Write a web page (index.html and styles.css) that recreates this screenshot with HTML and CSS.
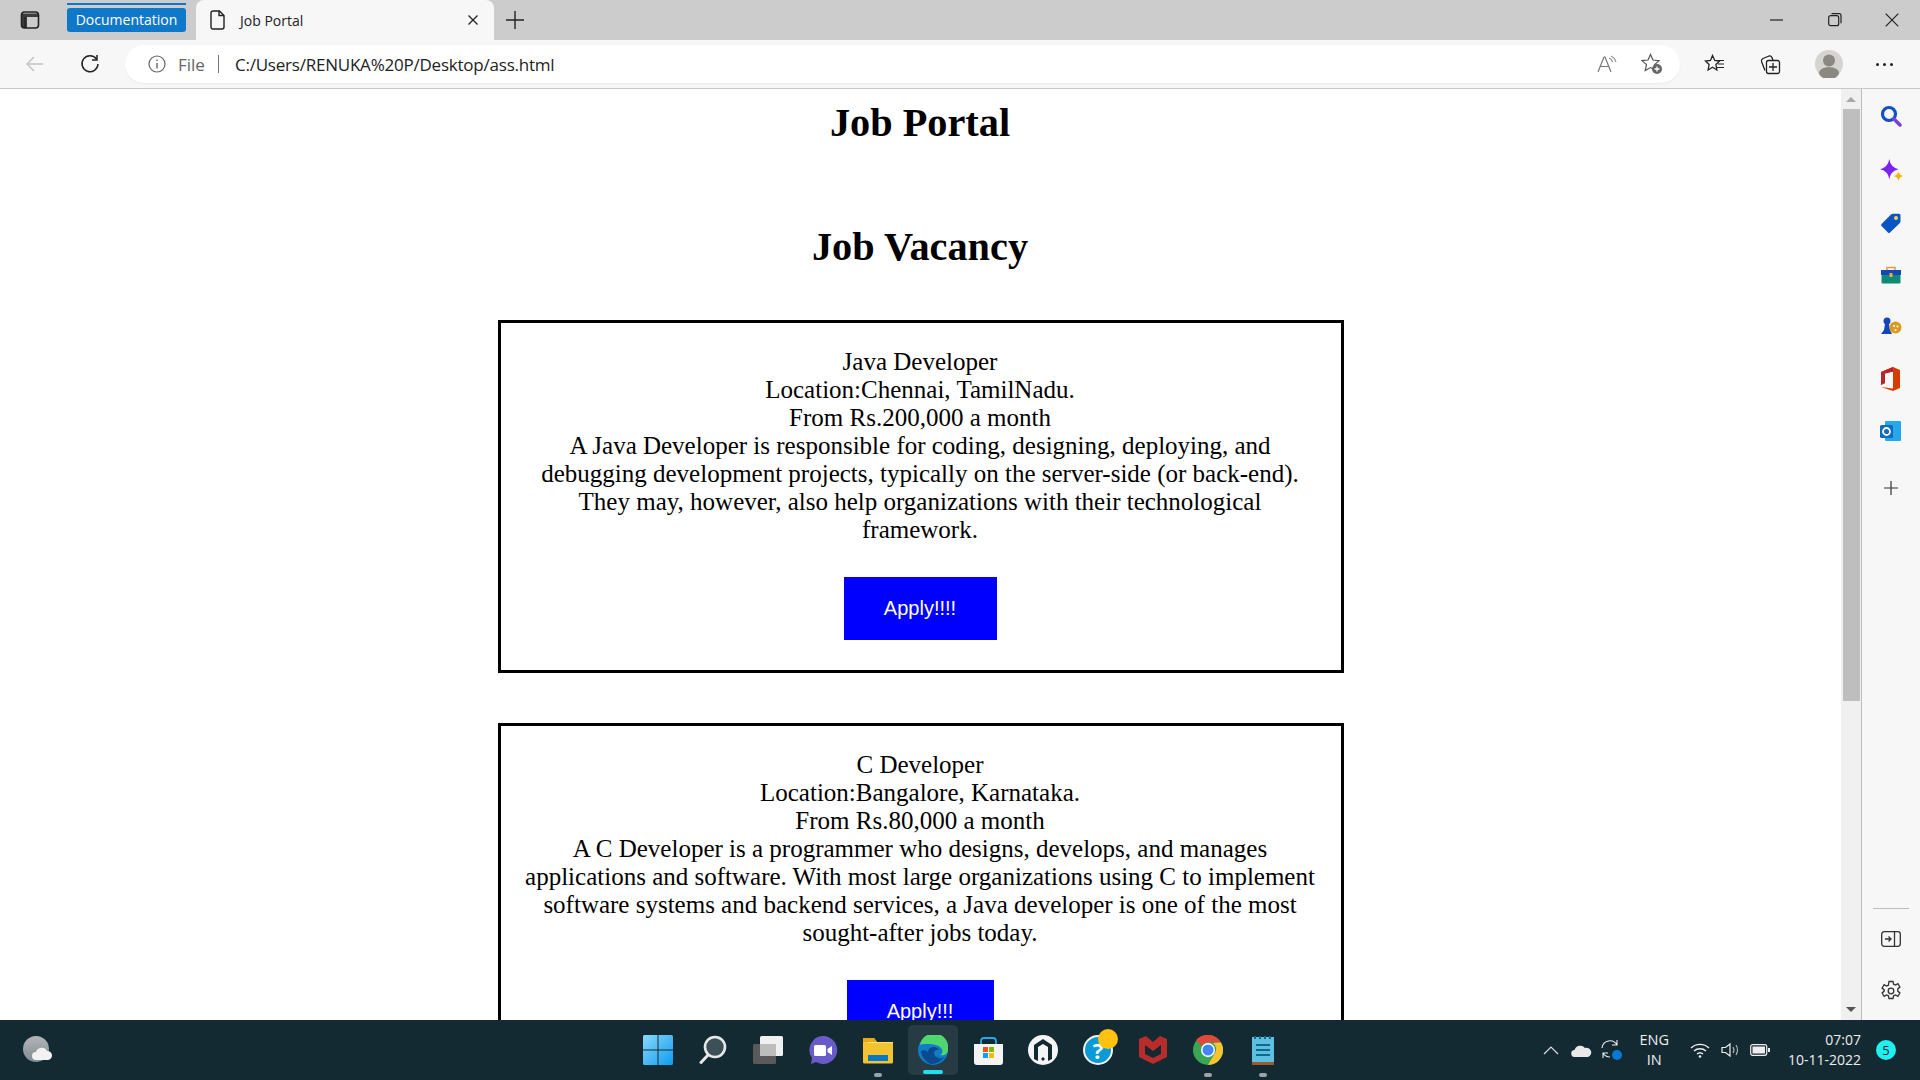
FILE: index.html
```html
<!DOCTYPE html>
<html lang="en">
<head>
<meta charset="utf-8">
<title>Job Portal</title>
<link rel="stylesheet" href="styles.css">
</head>
<body>
<div class="app">
  <header class="tabbar">
    <svg class="tabs-btn" width="20" height="20" viewBox="0 0 20 20"><rect x="1.5" y="2" width="17" height="16" rx="3" fill="none" stroke="#222" stroke-width="1.6"/><path d="M2 3.5h16v3.5H7v11H2z" fill="#222" opacity=".85"/><path d="M5 7v11" stroke="#222" stroke-width="1.4"/></svg>
    <div class="group"><span class="group-line"></span><span class="group-label">Documentation</span></div>
    <div class="tab">
      <svg width="16" height="20" viewBox="0 0 16 20"><path d="M2.500 1h7l4.500 4.500V17a2 2 0 0 1-2 2h-9a2 2 0 0 1-2-2V3a2 2 0 0 1 2-2z M9 1v4.500h5" fill="none" stroke="#222" stroke-width="1.4"/></svg>
      <span class="tab-title">Job Portal</span>
      <svg class="tab-close" width="12" height="12" viewBox="0 0 12 12"><path d="M1.500 1.500l9 9M10.500 1.500l-9 9" stroke="#222" stroke-width="1.300"/></svg>
    </div>
    <svg class="new-tab" width="20" height="20" viewBox="0 0 20 20"><path d="M10 1v18M1 10h18" stroke="#222" stroke-width="1.400"/></svg>
    <div class="win-controls">
      <svg width="14" height="14" viewBox="0 0 14 14"><path d="M0 7h13" stroke="#222" stroke-width="1.200"/></svg>
      <svg width="14" height="14" viewBox="0 0 14 14"><rect x=".7" y="2.700" width="10" height="10" rx="2" fill="none" stroke="#222" stroke-width="1.200"/><path d="M3.500 .7h7.500a2 2 0 0 1 2 2v7.500" fill="none" stroke="#222" stroke-width="1.200"/></svg>
      <svg width="14" height="14" viewBox="0 0 14 14"><path d="M.7 .7l12.600 12.600M13.300 .7L.7 13.300" stroke="#222" stroke-width="1.200"/></svg>
    </div>
  </header>
  <nav class="toolbar">
    <svg class="back" width="20" height="18" viewBox="0 0 20 18"><path d="M18 9H2M9 2L2 9l7 7" fill="none" stroke="#c4c4c4" stroke-width="1.500"/></svg>
    <svg class="reload" width="20" height="20" viewBox="0 0 20 20"><path d="M16.500 5A8 8 0 1 0 18 10" fill="none" stroke="#222" stroke-width="1.500"/><path d="M17 1v5h-5" fill="none" stroke="#222" stroke-width="1.500"/></svg>
    <div class="address">
      <svg width="20" height="20" viewBox="0 0 20 20"><circle cx="10" cy="10" r="8" fill="none" stroke="#666" stroke-width="1.200"/><path d="M10 9v5.500M10 5.500v1.500" stroke="#666" stroke-width="1.400"/></svg>
      <span class="scheme">File</span>
      <span class="sep"></span>
      <span class="url">C:/Users/RENUKA%20P/Desktop/ass.html</span>
      <span class="grow"></span>
      <svg width="20" height="18" viewBox="0 0 20 18"><path d="M1 17L7 2h1l6 15M3.500 11.500h9" fill="none" stroke="#777" stroke-width="1.200"/><path d="M12 3q3 1 3.500 4M14 1q4 1.500 5 6" fill="none" stroke="#777" stroke-width="1"/></svg>
      <svg class="fav-add" width="22" height="22" viewBox="0 0 22 22"><path d="M9.500 1.500l2.500 5.500 6 .6-4.500 4 1.300 6-5.300-3-5.300 3 1.300-6-4.500-4 6-.6z" fill="none" stroke="#555" stroke-width="1.200"/><circle cx="16" cy="16" r="5" fill="#666"/><path d="M16 13.500v5M13.500 16h5" stroke="#fff" stroke-width="1.300"/></svg>
    </div>
    <svg class="tool-fav" width="22" height="20" viewBox="0 0 22 20"><path d="M8.500 1.500l2.200 5 5 .5-3.800 3.500 1 5.500-4.400-2.700-4.400 2.700 1-5.500L1.500 7l5-.5z" fill="none" stroke="#222" stroke-width="1.300"/><path d="M13 6.500h7M14 10h6M13 13.500h7" stroke="#222" stroke-width="1.200"/></svg>
    <svg class="tool-col" width="21" height="21" viewBox="0 0 21 21"><rect x="6.500" y="6.500" width="13" height="13" rx="2" fill="none" stroke="#222" stroke-width="1.300"/><path d="M13 9v8M9 13h8" stroke="#222" stroke-width="1.300"/><path d="M5 16.500L1.500 7.500q-.5-2 1.500-3l6-2.500q2-.5 3 1.500l1 3" fill="none" stroke="#222" stroke-width="1.300"/></svg>
    <div class="avatar"><svg width="28" height="28" viewBox="0 0 28 28"><circle cx="14" cy="14" r="14" fill="#d6d4cf"/><circle cx="14" cy="10.500" r="6" fill="#8b8781"/><ellipse cx="14" cy="23" rx="10" ry="6" fill="#8b8781"/></svg></div>
    <div class="more"><i></i><i></i><i></i></div>
  </nav>
  <main class="main">
    <div class="page">
      <h1 class="title">Job Portal</h1>
      <h1 class="subtitle">Job Vacancy</h1>
      <section class="job">
        <p class="job-text">Java Developer<br>Location:Chennai, TamilNadu.<br>From Rs.200,000 a month<br>A Java Developer is responsible for coding, designing, deploying, and debugging development projects, typically on the server-side (or back-end). They may, however, also help organizations with their technological framework.</p>
        <button class="apply apply-wide">Apply!!!!</button>
      </section>
      <section class="job">
        <p class="job-text">C Developer<br>Location:Bangalore, Karnataka.<br>From Rs.80,000 a month<br>A C Developer is a programmer who designs, develops, and manages applications and software. With most large organizations using C to implement software systems and backend services, a Java developer is one of the most sought-after jobs today.</p>
        <button class="apply">Apply!!!</button>
      </section>
    </div>
    <div class="scrollbar">
      <span class="arrow-up"></span>
      <div class="thumb"></div>
      <span class="arrow-down"></span>
    </div>
    <aside class="sidebar">
      <svg width="22" height="22" viewBox="0 0 22 22"><circle cx="9" cy="9" r="6.500" fill="none" stroke="#1250c8" stroke-width="3.200"/><path d="M14 14l6 6" stroke="#7a3fe0" stroke-width="3.500" stroke-linecap="round"/></svg>
      <svg class="side-star" width="24" height="24" viewBox="0 0 21 21"><path d="M9 0q1 7 8 9-7 1.500-8 9-1-7.500-8-9 7-2 8-9z" fill="#7a22f0"/><path d="M17 11q.4 3 4 4-3.600.5-4 4.500-.4-4-4-4.500 3.600-1 4-4z" fill="#f5b400"/></svg>
      <svg width="22" height="22" viewBox="0 0 22 22"><path d="M1.500 12L11 2.500q1-.8 2-.8h6q1.500 0 1.500 1.500v6q0 1-.8 2L10 20.500q-1 1-2 0l-6.500-6.500q-1-1 0-2z" fill="#0a55c4"/><circle cx="16" cy="6" r="2" fill="#ffd23f"/></svg>
      <svg width="22" height="22" viewBox="0 0 22 20"><path d="M7 5V2.500h8V5" fill="none" stroke="#d9a13a" stroke-width="1.500"/><rect x="1" y="5" width="20" height="5" fill="#1446b8"/><rect x="1.500" y="10" width="19" height="8.500" rx="1" fill="#0d8a78"/><rect x="9.500" y="8" width="3" height="4" fill="#f0b030"/></svg>
      <svg width="22" height="22" viewBox="0 0 22 22"><circle cx="7" cy="5" r="3.500" fill="#1446b8"/><path d="M5 8h4l1 6 2 4H1l3-4z" fill="#1446b8"/><circle cx="15.500" cy="11.500" r="6" fill="#dc9a20"/><circle cx="14" cy="10" r="1" fill="#fff"/><circle cx="17.500" cy="10.500" r="1" fill="#fff"/><circle cx="15.500" cy="14" r="1" fill="#fff"/></svg>
      <svg class="side-office" width="22" height="24" viewBox="0 0 22 24"><path d="M1 5L13 0l7 3v18l-7 3-12-4 12 1.500V4.500L5 6.500v9.500L1 18z" fill="#d83b01"/><path d="M1 5l12-5v4.500L5 6.500V16l-4 2z" fill="#b8232f"/></svg>
      <svg width="22" height="22" viewBox="0 0 22 22"><rect x="5" y="1" width="16" height="20" rx="1" fill="#28a8ea"/><rect x="0" y="5" width="13" height="13" rx="1.500" fill="#0f6cbd"/><circle cx="6.500" cy="11.500" r="3.500" fill="none" stroke="#fff" stroke-width="1.800"/></svg>
      <svg class="side-plus" width="14" height="14" viewBox="0 0 14 14"><path d="M7 0v14M0 7h14" stroke="#333" stroke-width="1.200"/></svg>
      <span class="grow"></span>
      <span class="side-rule"></span>
      <svg class="side-hide" width="20" height="16" viewBox="0 0 20 16"><rect x=".7" y=".7" width="18.600" height="14.600" rx="2.500" fill="none" stroke="#333" stroke-width="1.300"/><path d="M13.500 1v14" stroke="#333" stroke-width="1.300"/><path d="M4 8h6M7.500 5.500L10 8l-2.500 2.500" fill="none" stroke="#333" stroke-width="1.300"/></svg>
      <svg class="side-gear" width="22" height="22" viewBox="0 0 22 22"><path d="M9 1.500h4l.6 2.700 1.900.8 2.400-1.400 2 3.400-2.100 1.900v2.200l2.100 1.900-2 3.400-2.400-1.400-1.900.8-.6 2.700H9l-.6-2.700-1.900-.8-2.400 1.400-2-3.400 2.100-1.900V9.900L2.100 8l2-3.400 2.400 1.400 1.900-.8z" fill="none" stroke="#333" stroke-width="1.300"/><circle cx="11" cy="11" r="2.800" fill="none" stroke="#333" stroke-width="1.300"/></svg>
    </aside>
  </main>
  <footer class="taskbar">
    <svg class="weather" width="30" height="28" viewBox="0 0 30 28"><defs><linearGradient id="moon" x1="0" y1="0" x2="0" y2="1"><stop offset="0" stop-color="#b4b6b8"/><stop offset="1" stop-color="#7f8b92"/></linearGradient></defs><circle cx="13" cy="13" r="13" fill="url(#moon)"/><path d="M13 24a4 4 0 0 1 0-8 6 6 0 0 1 11-1 4.500 4.500 0 0 1 1 9z" fill="#f2f2f2"/></svg>
    <div class="task-center">
      <div class="task-app"><svg width="30" height="30" viewBox="0 0 30 30"><defs><linearGradient id="win" x1="0" y1="0" x2="1" y2="1"><stop offset="0" stop-color="#8ad8fb"/><stop offset="1" stop-color="#0e9cf0"/></linearGradient></defs><path d="M0 1.500Q0 0 1.500 0h13v14.500H0zM15.500 0h13Q30 0 30 1.500v13H15.500zM0 15.500h14.500V30h-13Q0 30 0 28.500zM15.500 15.500H30v13q0 1.500-1.500 1.500h-13z" fill="url(#win)"/></svg></div>
      <div class="task-app"><svg width="28" height="30" viewBox="0 0 28 30"><circle cx="16" cy="12" r="10" fill="#3d5056" stroke="#e8e8e8" stroke-width="2.600"/><path d="M9 20l-7 7.500" stroke="#e8e8e8" stroke-width="3" stroke-linecap="round"/></svg></div>
      <div class="task-app"><svg width="30" height="28" viewBox="0 0 30 28"><rect x="7" y="0" width="23" height="20" rx="1.500" fill="#f0f0f0"/><rect x="0" y="8" width="23" height="20" rx="1.500" fill="#5a5a5a"/><rect x="7" y="8" width="16" height="12" fill="#bdbdbd"/></svg></div>
      <div class="task-app"><svg width="30" height="30" viewBox="0 0 30 30"><path d="M15 1a14 14 0 1 1-7 26l-5 2 1-6A14 14 0 0 1 15 1z" fill="#6a5cc8"/><rect x="6" y="10" width="12" height="11" rx="1.500" fill="#fff"/><path d="M19.500 14l4.500-3v9l-4.500-3z" fill="#fff"/></svg></div>
      <div class="task-app"><svg width="32" height="28" viewBox="0 0 32 28"><path d="M1 2h11l3 4h16v20a1.500 1.500 0 0 1-1.500 1.500h-27A1.500 1.500 0 0 1 1 26z" fill="#f4c430"/><path d="M1 2h11l3 4H1z" fill="#e8a818"/><rect x="6" y="6" width="25" height="1" fill="#ffe27a"/><path d="M6 19h20v6H6z" fill="#0a78c8"/></svg><span class="dot"></span></div>
      <div class="task-app task-edge"><svg width="30" height="30" viewBox="0 0 30 30"><circle cx="15" cy="15" r="15" fill="#0f7cc8"/><path d="M2 10A14 14 0 0 1 30 15c0 4-4 6-8 5 3-1 3-5 1-7-3-4-15-5-21-3z" fill="#4fd66f"/><path d="M10 17c0-5 8-7 11-2-2-1-5 0-5 3 0 4 6 7 10 4a15 15 0 0 1-13 7C9 28 3 22 3 16c2-1 5-1 7 1z" fill="#0b4a8f"/></svg><span class="dash"></span></div>
      <div class="task-app"><svg width="29" height="29" viewBox="0 0 29 29"><path d="M7 8V5q0-3 3-3h9q3 0 3 3v3" fill="none" stroke="#2aa8e6" stroke-width="1.800"/><path d="M0 8h29v18q0 3-3 3H3q-3 0-3-3z" fill="#f4f4f4"/><rect x="9" y="11" width="5" height="5" fill="#f25022"/><rect x="15" y="11" width="5" height="5" fill="#7fba00"/><rect x="9" y="17" width="5" height="5" fill="#00a4ef"/><rect x="15" y="17" width="5" height="5" fill="#ffb900"/></svg></div>
      <div class="task-app"><svg width="30" height="30" viewBox="0 0 30 30"><circle cx="15" cy="15" r="15" fill="#f5f5f5"/><path d="M6 10l9-6 9 6v14l-4 2V12l-5-3-5 3v14l-4-2z" fill="#14282f"/><path d="M13 24l2-2 2 2-2 2z" fill="#14282f"/></svg></div>
      <div class="task-app"><svg width="30" height="30" viewBox="0 0 30 30"><circle cx="15" cy="15" r="14" fill="#0a9ad6" stroke="#f2f2f2" stroke-width="2"/></svg><span class="help-mark">?</span><span class="help-badge"></span></div>
      <div class="task-app"><svg width="28" height="30" viewBox="0 0 28 30"><path d="M0 4l7-3 7 6 7-6 7 3v18l-14 7L0 22z" fill="#b82c2c"/><path d="M6 10l8 6 8-6v9l-8 4-8-4z" fill="#14282f"/></svg></div>
      <div class="task-app"><svg width="30" height="30" viewBox="0 0 30 30"><circle cx="15" cy="15" r="15" fill="#3aa655"/><path d="M15 0a15 15 0 0 1 13 7.500H15a7.500 7.500 0 0 0-6.500 3.750L3 5A15 15 0 0 1 15 0z" fill="#e0483a"/><path d="M28 7.500A15 15 0 0 1 15 30l6.500-11.250A7.500 7.500 0 0 0 20 8z" fill="#f5c530"/><circle cx="15" cy="15" r="7" fill="#fff"/><circle cx="15" cy="15" r="5.500" fill="#4285f4"/></svg><span class="dot"></span></div>
      <div class="task-app"><svg width="24" height="30" viewBox="0 0 24 30"><rect x="1" y="2" width="22" height="26" fill="#5dc0e0"/><rect x="1" y="27" width="22" height="3" fill="#9a5a2a"/><path d="M5 10h14M5 15h14M5 20h14" stroke="#11688f" stroke-width="2"/><path d="M4 1v3M9 1v3M14 1v3M19 1v3" stroke="#11688f" stroke-width="2"/></svg><span class="dot"></span></div>
    </div>
    <div class="tray">
      <svg width="16" height="10" viewBox="0 0 16 10"><path d="M1 9l7-7 7 7" fill="none" stroke="#ddd" stroke-width="1.200"/></svg>
      <svg class="tray-cloud" width="21" height="14" viewBox="0 0 21 14"><path d="M4 14a3.500 3.500 0 0 1-.5-7A6 6 0 0 1 14 5a4.500 4.500 0 0 1 3 9z" fill="#e8e8e8"/></svg>
      <div class="tray-sync"><svg width="20" height="20" viewBox="0 0 20 20"><path d="M1 9a8 8 0 0 1 15-3M16 1v5h-5M2 19v-5h5M2 14a8 8 0 0 0 7 4" fill="none" stroke="#eee" stroke-width="1.100"/></svg><span class="sync-dot"></span></div>
      <div class="lang"><span>ENG</span><span>IN</span></div>
      <svg class="tray-wifi" width="20" height="16" viewBox="0 0 20 16"><path d="M1 6a13 13 0 0 1 18 0M4 9a9 9 0 0 1 12 0M7 12a4.500 4.500 0 0 1 6 0" fill="none" stroke="#eee" stroke-width="1.400"/><circle cx="10" cy="14.500" r="1.300" fill="#eee"/></svg>
      <svg class="tray-vol" width="20" height="16" viewBox="0 0 20 16"><path d="M1 5.500h3.500L9 2v12L4.500 10.500H1z" fill="none" stroke="#eee" stroke-width="1.200"/><path d="M12 5q2 3 0 6M15 3q3 5 0 10" fill="none" stroke="#bbb" stroke-width="1.100"/></svg>
      <svg width="20" height="14" viewBox="0 0 20 14"><rect x=".7" y="1.700" width="16" height="10.600" rx="2" fill="none" stroke="#eee" stroke-width="1.200"/><rect x="2.500" y="3.500" width="12.500" height="7" fill="#eee"/><rect x="18" y="5" width="2" height="4" fill="#eee"/></svg>
      <div class="clock"><span>07:07</span><span>10-11-2022</span></div>
      <span class="notif">5</span>
    </div>
  </footer>
</div>
</body>
</html>
```
FILE: styles.css
```css
* { box-sizing: border-box; }
html, body { margin: 0; padding: 0; height: 100%; overflow: hidden; }
.app { width: 1920px; height: 1080px; display: flex; flex-direction: column; font-family: "Open Sans", "Noto Sans", sans-serif; }
.grow { flex: 1; }

.tabbar { height: 40px; background: #cccccc; display: flex; align-items: center; flex: none; }
.tabs-btn { margin-left: 20px; }
.group { margin-left: 27px; width: 119px; height: 40px; display: flex; flex-direction: column; padding-top: 3px; gap: 3px; flex: none; }
.group-line { height: 2px; background: #0f78c8; flex: none; }
.group-label { height: 24px; background: #0f78c8; color: #fff; font-size: 14px; border-radius: 3px; text-align: center; line-height: 23px; }
.tab { margin-left: 10px; width: 298px; height: 40px; background: #f7f7f7; border-radius: 8px 8px 0 0; display: flex; align-items: center; padding: 0 15px 0 14px; flex: none; }
.tab-title { margin-left: 14px; font-size: 14px; color: #222; flex: 1; }
.new-tab { margin-left: 11px; }
.win-controls { margin-left: auto; display: flex; gap: 43.500px; padding-right: 21px; align-items: center; }

.toolbar { height: 49px; background: #f7f7f7; border-bottom: 1px solid #c9c9c9; display: flex; align-items: center; flex: none; }
.back { margin-left: 25px; }
.reload { margin-left: 35px; }
.address { margin-left: 25px; width: 1555px; height: 38px; background: #fff; border-radius: 19px; display: flex; align-items: center; padding: 0 17px 0 22px; box-shadow: 0 1px 2px rgba(0,0,0,.06); flex: none; }
.scheme { margin-left: 11px; font-size: 17px; color: #666; }
.sep { width: 1px; height: 18px; background: #777; margin: 0 16px 0 13px; }
.url { font-size: 17px; color: #222; letter-spacing: -.22px; }
.fav-add { margin-left: 24px; }
.tool-fav { margin-left: 24px; }
.tool-col { margin-left: 34px; }
.avatar { margin-left: 34px; height: 28px; }
.more { margin-left: 33px; display: flex; gap: 4px; }
.more i { width: 3px; height: 3px; background: #222; border-radius: 50%; }

.main { flex: 1; display: flex; min-height: 0; background: #fff; }
.page { width: 1841px; flex: none; overflow: hidden; }
.title, .subtitle { font-family: "Liberation Serif", "Times New Roman", serif; font-size: 40.300px; font-weight: 700; color: #000; text-align: center; margin: 0; line-height: 46px; padding-right: 1px; }
.title { margin-top: 11px; }
.subtitle { margin-top: 78px; }
.job { width: 846px; margin: 0 0 50px 498px; border: 3px solid #000; display: flex; flex-direction: column; align-items: center; padding: 25px 25px 30px 23px; font-family: "Liberation Serif", "Times New Roman", serif; background: #fff; }
.subtitle + .job { margin-top: 50px; }
.job-text { margin: 0; font-size: 25px; line-height: 28px; text-align: center; color: #000; }
.apply { margin-top: 33px; width: 147px; height: 63px; background: #0000ff; color: #fff; border: 0; font-family: "Liberation Sans", Arial, sans-serif; font-size: 20px; padding: 0; flex: none; }
.apply-wide { width: 153px; }

.scrollbar { width: 21px; flex: none; background: #f0f0f0; border-right: 1px solid #bdbdbd; display: flex; flex-direction: column; align-items: center; padding: 0 1px; }
.arrow-up { width: 0; height: 0; border: 5px solid transparent; border-top: 0; border-bottom: 5px solid #a8a8a8; margin-top: 8px; flex: none; }
.thumb { width: 17px; height: 592px; background: #bebebe; margin-top: 7px; flex: none; }
.arrow-down { width: 0; height: 0; border: 5px solid transparent; border-bottom: 0; border-top: 5px solid #555; margin-top: auto; margin-bottom: 8px; flex: none; }

.sidebar { flex: 1; background: #f7f7f7; display: flex; flex-direction: column; align-items: center; padding: 16px 0 18px; gap: 30px; }
.side-star { margin: 2px 0 -1px; }
.side-office { margin: -1px 0; }
.side-plus { margin-top: 9px; }
.sidebar .grow { margin-top: -30px; }
.side-rule { width: 36px; height: 1px; background: #bdbdbd; flex: none; margin-bottom: -8px; }
.side-gear { margin-top: 3px; }

.taskbar { height: 60px; background: #142a33; flex: none; display: flex; align-items: center; position: relative; color: #eee; }
.weather { margin-left: 23px; }
.task-center { position: absolute; left: 643px; top: 0; height: 60px; display: flex; align-items: center; gap: 25px; }
.task-app { position: relative; display: flex; align-items: center; justify-content: center; width: 30px; height: 60px; }
.task-app svg { flex: none; position: relative; }
.dot { position: absolute; bottom: 3px; left: 50%; margin-left: -4px; width: 8px; height: 4px; background: #9aa4a8; border-radius: 2px; }
.task-edge::before { content: ""; position: absolute; top: 5px; bottom: 5px; left: -10px; right: -10px; background: #263b43; border-radius: 5px; }
.dash { position: absolute; bottom: 6px; left: 50%; margin-left: -10px; width: 20px; height: 4px; background: #20e0f0; border-radius: 2px; }
.help-mark { position: absolute; left: 0; width: 30px; top: 15px; text-align: center; color: #fff; font-size: 22px; line-height: 30px; font-weight: 700; font-family: "Open Sans", sans-serif; }
.help-badge { position: absolute; top: 9px; left: 15px; width: 20px; height: 20px; border-radius: 50%; background: #ffc20e; }

.tray { margin-left: auto; display: flex; align-items: center; padding-right: 24px; color: #eee; }
.tray-cloud { margin-left: 12px; }
.tray-sync { margin-left: 9px; width: 22px; height: 22px; position: relative; }
.sync-dot { position: absolute; right: 1px; bottom: 1px; width: 10px; height: 10px; border-radius: 50%; background: #0a78d8; }
.lang { margin-left: 16px; margin-right: 21px; display: flex; flex-direction: column; align-items: center; font-size: 14.500px; line-height: 20px; }
.tray-wifi { margin-right: 11px; }
.tray-vol { margin-right: 9px; }
.clock { margin-left: 18px; display: flex; flex-direction: column; align-items: flex-end; font-size: 14px; line-height: 20px; }
.notif { margin-left: 15px; width: 20px; height: 20px; border-radius: 50%; background: #20f0f0; color: #142a33; font-size: 13px; text-align: center; line-height: 20px; }
```
